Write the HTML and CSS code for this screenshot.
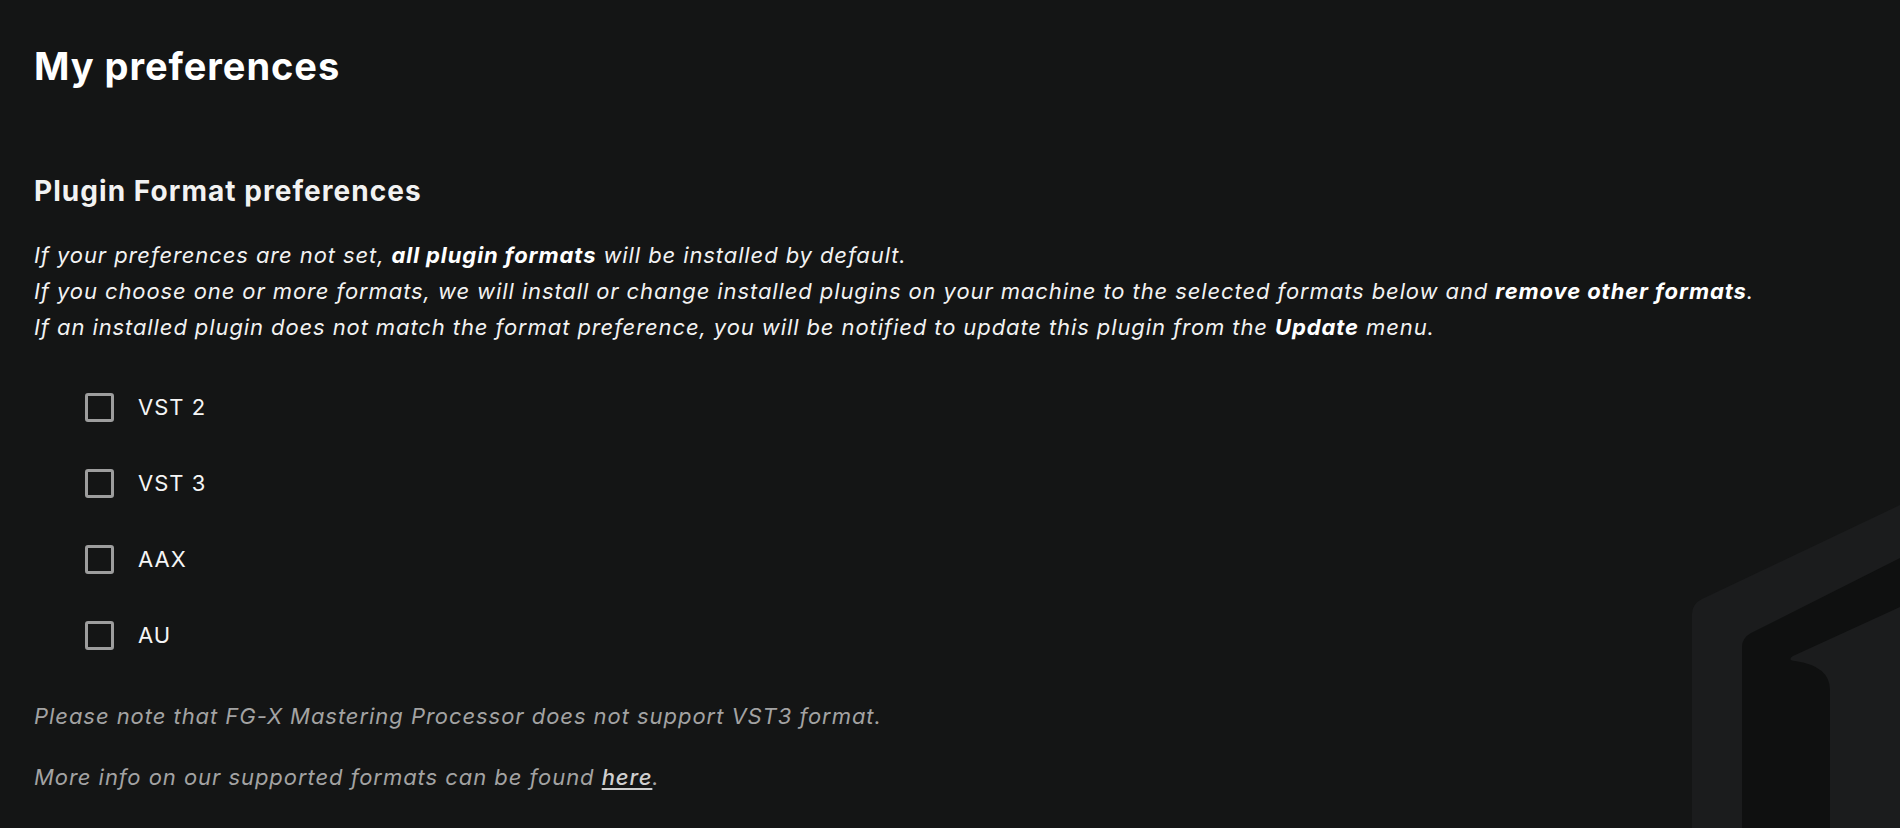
FILE: index.html
```html
<!DOCTYPE html>
<html lang="en">
<head>
<meta charset="utf-8">
<title>My preferences</title>
<link rel="stylesheet" href="styles.css">
</head>
<body>
<main class="page">
  <h1 class="title">My preferences</h1>
  <section class="section">
    <h2 class="section-title">Plugin Format preferences</h2>
    <p class="intro">
      If your preferences are not set, <b>all plugin formats</b> will be installed by default.<br>
      If you choose one or more formats, we will install or change installed plugins on your machine to the selected formats below and <b>remove other formats</b>.<br>
      If an installed plugin does not match the format preference, you will be notified to update this plugin from the <b>Update</b> menu.
    </p>
    <ul class="formats">
      <li class="format"><span class="box"></span><span class="label">VST 2</span></li>
      <li class="format"><span class="box"></span><span class="label">VST 3</span></li>
      <li class="format"><span class="box"></span><span class="label">AAX</span></li>
      <li class="format"><span class="box"></span><span class="label">AU</span></li>
    </ul>
    <p class="note note-first">Please note that FG-X Mastering Processor does not support VST3 format.</p>
    <p class="note">More info on our supported formats can be found <a class="link" href="#">here</a>.</p>
  </section>
  <svg class="deco" width="220" height="338" viewBox="1680 490 220 338" aria-hidden="true">
    <path fill="#1b1c1d" d="M1692 828 L1692 614 Q1692 604 1702 599 L1900 505 L1900 828 Z"/>
    <path fill="#0f1010" d="M1742 828 L1742 647 Q1742 638 1751 633 L1900 558 L1900 607 L1793 656 Q1787 660 1795 661 Q1830 666 1830 690 L1830 828 Z"/>
  </svg>
</main>
</body>
</html>
```
FILE: styles.css
```css
html, body {
  margin: 0;
  padding: 0;
  background: #141515;
  height: 100%;
  overflow: hidden;
}
body {
  font-family: "Inter", "Liberation Sans", sans-serif;
  color: #ffffff;
}
.page {
  position: relative;
  height: 828px;
  padding: 43px 34px 0;
  box-sizing: border-box;
}
.title {
  margin: 0;
  font-size: 38px;
  line-height: 46px;
  font-weight: 700;
  letter-spacing: 0.95px;
  color: #ffffff;
}
.section-title {
  margin: 85px 0 0;
  font-size: 28px;
  line-height: 34px;
  font-weight: 700;
  letter-spacing: 1.05px;
  color: #f2f2f2;
}
.intro {
  margin: 29px 0 0;
  font-size: 22px;
  line-height: 36px;
  font-style: italic;
  letter-spacing: 0.9px;
  color: #f2f2f2;
}
.intro b {
  font-weight: 700;
  color: #ffffff;
}
.formats {
  list-style: none;
  margin: 48px 0 0;
  padding: 0 0 0 51px;
  display: flex;
  flex-direction: column;
  gap: 47px;
}
.format {
  display: flex;
  align-items: center;
  gap: 24px;
  height: 29px;
}
.box {
  width: 29px;
  height: 29px;
  box-sizing: border-box;
  border: 3px solid #9d9d9d;
  border-radius: 3px;
}
.label {
  font-size: 22px;
  line-height: 29px;
  letter-spacing: 1px;
  color: #f5f5f5;
}
.note {
  margin: 25px 0 0;
  font-size: 22px;
  line-height: 36px;
  font-style: italic;
  letter-spacing: 0.95px;
  color: #a3a3a3;
}
.note-first {
  margin-top: 48px;
}
.link {
  color: #cfcfcf;
  font-weight: 500;
  text-decoration: underline;
  text-underline-offset: 3px;
}
.deco {
  position: absolute;
  right: 0;
  bottom: 0;
  display: block;
}
```
